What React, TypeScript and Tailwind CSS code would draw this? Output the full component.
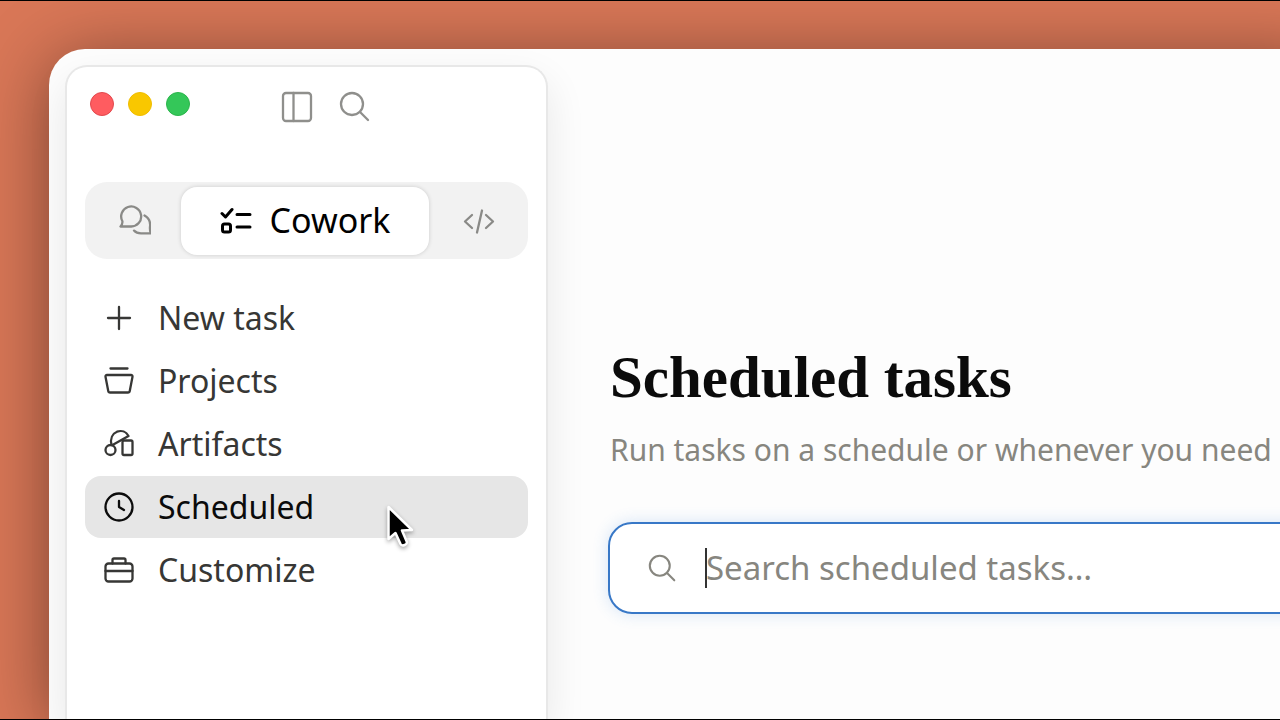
import type {ReactNode} from "react";

const Icon = ({children, className}: {children: ReactNode; className?: string}) => (
    <svg
        viewBox="0 0 32 32"
        fill="none"
        stroke="currentColor"
        strokeWidth={2.3}
        strokeLinecap="round"
        strokeLinejoin="round"
        aria-hidden="true"
        className={className ?? "size-8 shrink-0"}
    >
        {children}
    </svg>
);

const SearchIcon = ({className}: {className?: string}) => (
    <Icon className={className}>
        <circle cx="13" cy="13" r="11"/>
        <path d="M21 21l8 8"/>
    </Icon>
);

const SidebarIcon = () => (
    <Icon>
        <rect x="2" y="2" width="28" height="28" rx="3"/>
        <path d="M12.5 2v28"/>
    </Icon>
);

const ChatIcon = () => (
    <Icon>
        <path d="M1.500 21.500h10.500a10 10 0 1 0-8.600-5.200c.2 2-.4 3.600-1.900 5.200Z"/>
        <path d="M25.500 10.500c4 2.300 6 5.700 5.600 10.300-.4 3-.2 5 .6 7.600H22c-3 0-5.300-.9-7-2.800"/>
    </Icon>
);

const ChecklistIcon = () => (
    <Icon>
        <g strokeWidth={3}>
            <path d="m2 8.500 3.500 3.500L12 4.500"/>
            <rect x="2.500" y="19" width="8" height="8" rx="2"/>
            <path d="M17 9.500h13M17 22h13"/>
        </g>
    </Icon>
);

const CodeIcon = () => (
    <Icon>
        <path d="m9 10-7 6.500L9 23M23 10l7 6.500-7 6.500M19 5.500l-5 22"/>
    </Icon>
);

const navItems = [
    {
        label: "New task",
        icon: <path d="M16 5v22M5 16h22"/>,
    },
    {
        label: "Projects",
        icon: <path d="M7.500 3.500h17M4 10h24a1.500 1.500 0 0 1 1.500 1.800l-2.700 14a2 2 0 0 1-2 1.700H7.200a2 2 0 0 1-2-1.700l-2.700-14A1.500 1.500 0 0 1 4 10Z"/>,
    },
    {
        label: "Artifacts",
        icon: (
            <>
                <circle cx="7.500" cy="22" r="5"/>
                <path d="M8.500 17C7 10.500 9.500 5.500 14 3.700c4.600-1.700 9.200 0 11.500 4.300L9.500 17"/>
                <rect x="19.500" y="12.500" width="10" height="14.500" rx="1.500"/>
            </>
        ),
    },
    {
        label: "Scheduled",
        icon: (
            <>
                <circle cx="16" cy="16" r="13.500"/>
                <path d="M16 10v6l5 3"/>
            </>
        ),
    },
    {
        label: "Customize",
        icon: (
            <>
                <rect x="2.500" y="9.500" width="27" height="18" rx="3"/>
                <path d="M9.500 9.500V6a1.500 1.500 0 0 1 1.500-1.500h10A1.500 1.500 0 0 1 22.500 6v3.500M2.500 17h27"/>
            </>
        ),
    },
];

const Pointer = () => (
    <svg
        viewBox="0 0 32 44"
        className="pointer-events-none absolute top-[28px] left-[300px] h-[44px] w-[32px] drop-shadow-[0_2px_2px_rgba(0,0,0,0.35)]"
        aria-hidden="true"
    >
        <path
            d="M3.500 3v32l7-6 5 11c1.500 3 7.500.5 6.200-2.500L17 26.500l10-.500Z"
            fill="#000"
            stroke="#fff"
            strokeWidth={2.500}
            strokeLinejoin="round"
        />
    </svg>
);

const Sidebar = () => (
    <aside className="flex w-[483px] shrink-0 flex-col rounded-t-[22px] border-2 border-b-0 border-[#e8e8e8] bg-white px-[18px] shadow-[0_16px_40px_rgba(0,0,0,0.09)]">
        <div className="flex h-[76px] items-center">
            <div className="flex gap-[14px] pb-[2px] pl-[5px]">
                <button aria-label="Close" className="size-6 rounded-full border border-[#e2484d] bg-[#ff5c60]"/>
                <button aria-label="Minimize" className="size-6 rounded-full border border-[#f0bd00] bg-[#f9c700]"/>
                <button aria-label="Zoom" className="size-6 rounded-full border border-[#2bb54b] bg-[#34c759]"/>
            </div>
            <div className="ml-[91px] flex gap-[26px] pt-1 text-[#8f8f8c]">
                <button aria-label="Toggle sidebar"><SidebarIcon/></button>
                <button aria-label="Search"><SearchIcon/></button>
            </div>
        </div>
        <div className="mt-[39px] flex h-[77px] items-center rounded-[22px] bg-[#f2f2f2] text-[#8a8a87]">
            <button aria-label="Chat" className="flex w-[96px] justify-center pl-1"><ChatIcon/></button>
            <button className="flex h-[68px] w-[248px] items-center justify-center gap-[18px] rounded-[16px] bg-white text-[34px] text-black shadow-[0_0_4px_rgba(0,0,0,0.16)]">
                <ChecklistIcon/>
                Cowork
            </button>
            <button aria-label="Code" className="flex flex-1 justify-center"><CodeIcon/></button>
        </div>
        <nav className="mt-[28px] flex flex-col gap-px text-[32px] text-[#373735]">
            {navItems.map((item) => (
                <a
                    key={item.label}
                    href="#"
                    className={item.label === "Scheduled"
                        ? "relative flex h-[62px] items-center gap-[23px] rounded-[16px] bg-[#e6e6e6] px-[18px] text-[#0b0b0b]"
                        : "flex h-[62px] items-center gap-[23px] rounded-[16px] px-[18px]"}
                >
                    <Icon>{item.icon}</Icon>
                    {item.label}
                    {item.label === "Scheduled" && <Pointer/>}
                </a>
            ))}
        </nav>
    </aside>
);

const ScheduledTasks = () => (
    <main className="min-w-0 flex-1 pt-[280px] pl-[60px]">
        <h1 className="pl-[2px] font-['Liberation_Serif',serif] text-[59px] leading-[64px] font-bold text-[#0b0b0b]">
            Scheduled tasks
        </h1>
        <p className="mt-[21px] pl-[2px] text-[30px] leading-[40px] whitespace-nowrap text-[#87867f]">
            Run tasks on a schedule or whenever you need
        </p>
        <label className="mt-[52px] flex h-[92px] items-center rounded-[24px] border-2 border-[#3878c7] bg-white pl-[38px] shadow-[0_0_16px_rgba(56,130,220,0.2)]">
            <SearchIcon className="size-[29px] shrink-0 text-[#87867f]"/>
            <span className="ml-[28px] h-[40px] w-[2px] shrink-0 bg-[#333]"/>
            <input
                type="text"
                aria-label="Search scheduled tasks"
                placeholder="Search scheduled tasks…"
                className="-ml-px min-w-0 flex-1 text-[33px] outline-none placeholder:text-[#87867f]"
            />
        </label>
    </main>
);

const App = () => {
    return (
        <div className="flex h-screen overflow-hidden border-y border-black bg-[#d97757] pt-[48px] pl-[49px] font-['Noto_Sans',sans-serif]">
            <div className="-mr-12 flex min-w-0 flex-1 rounded-tl-[36px] bg-[#fdfdfd] pt-4 pl-4 shadow-[0_8px_72px_rgba(0,0,0,0.42)]">
                <Sidebar/>
                <ScheduledTasks/>
            </div>
        </div>
    );
};

export default App;
